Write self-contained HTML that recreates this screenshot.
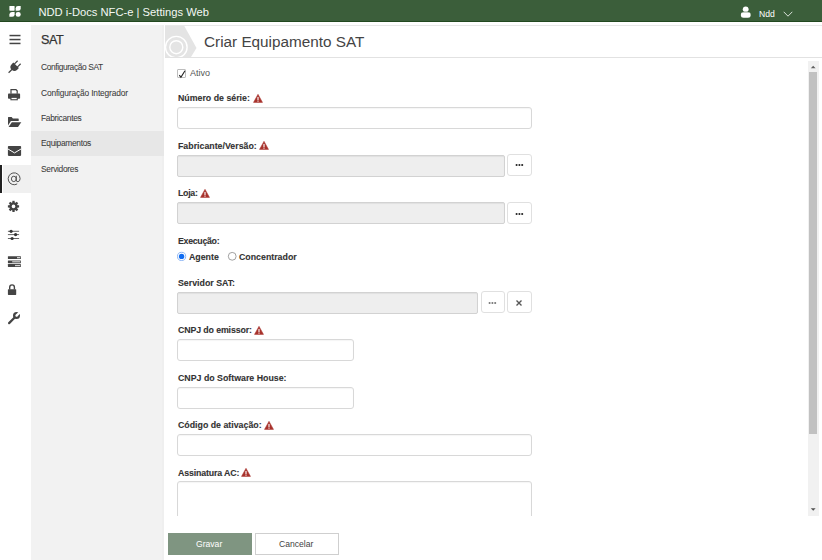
<!DOCTYPE html>
<html><head><meta charset="utf-8">
<style>
*{box-sizing:border-box;margin:0;padding:0}
html,body{width:822px;height:560px;overflow:hidden;background:#fff;font-family:"Liberation Sans",sans-serif;color:#333}
.a{position:absolute}
.t{position:absolute;white-space:nowrap;line-height:1}
#hdr{left:0;top:0;width:822px;height:22px;background:#3b5e3a;border-bottom:1px solid #22481f}
#sub{left:31px;top:25px;width:133px;height:535px;background:#f2f2f2}
.m{font-size:8.4px;color:#3a3a3a;left:41px;letter-spacing:-0.3px;-webkit-text-stroke:0.05px #3a3a3a}
.lbl{font-size:8.8px;font-weight:bold;color:#333;left:178px;-webkit-text-stroke:0.1px #333}
.inp{position:absolute;left:177px;height:22px;border:1px solid #d8d8d8;border-radius:3px;background:#fff;box-shadow:inset 0 1px 1px rgba(0,0,0,.04)}
.dis{background:#eeeeee;border-color:#d2d2d2;border-radius:2px;box-shadow:inset 0 1px 1px rgba(0,0,0,.06)}
.btn{position:absolute;width:25px;height:22px;border:1px solid #e0e0e0;border-radius:3px;background:#fff}
.warn{position:absolute}
</style></head><body>
<div id="hdr" class="a">
  <svg class="a" style="left:9px;top:5px" width="13" height="13" viewBox="9 5 13 13"><rect x="9.4" y="5.9" width="5.2" height="4.8" rx="0.6" fill="#fff"/><path d="M15.7 8.2 Q15.7 5.9 18 5.9 H20.7 V8.5 Q20.7 10.7 18.4 10.7 H15.7 Z" fill="#fff"/><path d="M9.4 14.5 Q9.4 12 11.8 12 H14.6 V14.4 Q14.6 16.7 12.3 16.7 H9.4 Z" fill="#fff"/><rect x="15.7" y="12" width="5" height="4.7" rx="2.3" fill="#fff"/></svg>
  <div class="t" id="htitle" style="left:38.4px;top:6.7px;font-size:11.2px;color:#f4f8f4">NDD i-Docs NFC-e | Settings Web</div>
  <svg class="a" style="left:738px;top:4px" width="16" height="16" viewBox="738 4 16 16"><circle cx="745.7" cy="9.3" r="2.9" fill="#fff"/><path d="M740.9 15.3 V14.6 Q740.9 12 743.5 12 H748 Q750.6 12 750.6 14.6 V15.3 Q750.6 17.8 748 17.8 H743.5 Q740.9 17.8 740.9 15.3 Z" fill="#fff"/><path d="M742 12 H749.5" stroke="#3b5e3a" stroke-width="0.6"/></svg>
  <div class="t" id="ndd" style="left:759px;top:9.5px;font-size:8.6px;color:#fff">Ndd</div>
  <svg class="a" style="left:783px;top:10.5px" width="10" height="7" viewBox="0 0 10 7"><path d="M0.7 0.8 L5 5.2 L9.3 0.8" stroke="#d8e0d8" stroke-width="1" fill="none"/></svg>
</div>

<!-- left rail -->
<div class="a" style="left:0;top:165px;width:2px;height:28px;background:#222"></div>
<div class="a" style="left:3px;top:165px;width:28px;height:28px;background:#f0f0f0"></div>
<svg class="a" style="left:0;top:26px" width="31" height="310" viewBox="0 26 31 310">
  <g fill="#444">
    <rect x="9.5" y="34.8" width="11" height="1.5"/>
    <rect x="9.5" y="38.8" width="11" height="1.5"/>
    <rect x="9.5" y="42.7" width="11" height="1.5"/>
    <!-- plug -->
    <g transform="translate(14.2 67.2) rotate(45) scale(0.85)">
      <rect x="-3.2" y="-8.2" width="1.4" height="5.5"/>
      <rect x="1.8" y="-8.2" width="1.4" height="5.5"/>
      <path d="M-4.6 -3.2 H4.6 V-0.4 A4.6 4.6 0 0 1 -4.6 -0.4 Z"/>
      <rect x="-0.7" y="3" width="1.4" height="6.3"/>
    </g>
    <!-- printer -->
    <path d="M10.4 89 H16.2 L17.8 90.6 V93.8 H16.6 V91.2 L15.8 90.2 H11.6 V93.8 H10.4 Z"/>
    <rect x="8" y="93.6" width="12.1" height="5.1" rx="0.8"/>
    <path d="M10.4 97.5 H17.8 V100.3 H10.4 Z"/>
    <rect x="11.5" y="97.9" width="5.2" height="1.3" fill="#fff"/>
    <!-- folder open -->
    <path d="M8 117.6 Q8 117.1 8.5 117.1 H11.6 L12.9 118.5 H18.2 Q18.7 118.5 18.7 119 V120.9 H10.9 L8 125.4 Z"/>
    <path d="M11.8 122.2 H21.3 L18 127.1 H8.6 Z"/>
    <!-- envelope -->
    <rect x="7.9" y="145.9" width="13.2" height="10" rx="0.8"/>
    <!-- gear -->
    <g transform="translate(13.5 206.4)">
      <circle r="4.2"/>
      <g id="tooth"><rect x="-1.15" y="-5.6" width="2.3" height="2.5"/></g>
      <use href="#tooth" transform="rotate(45)"/><use href="#tooth" transform="rotate(90)"/><use href="#tooth" transform="rotate(135)"/>
      <use href="#tooth" transform="rotate(180)"/><use href="#tooth" transform="rotate(225)"/><use href="#tooth" transform="rotate(270)"/><use href="#tooth" transform="rotate(315)"/>
      <circle r="1.8" fill="#fff"/>
    </g>
    <!-- sliders -->
    <rect x="7.9" y="230.8" width="11.2" height="1" fill="#666"/>
    <rect x="7.9" y="234.1" width="11.2" height="1" fill="#666"/>
    <rect x="7.9" y="238" width="11.2" height="1" fill="#666"/>
    <circle cx="11.1" cy="231.3" r="1.6" fill="#333"/>
    <circle cx="15.6" cy="234.6" r="1.6" fill="#333"/>
    <circle cx="12.1" cy="238.5" r="1.6" fill="#333"/>
    <!-- tasks -->
    <rect x="7.9" y="256.2" width="13" height="2.9" rx="0.4"/>
    <rect x="7.9" y="260.4" width="13" height="2.8" rx="0.4"/>
    <rect x="7.9" y="264.1" width="13" height="2.9" rx="0.4"/>
    <!-- lock -->
    <rect x="7.9" y="289.2" width="8.3" height="5.7" rx="0.6"/>
    <path d="M9.7 289.5 V287.2 A2.35 2.35 0 0 1 14.4 287.2 V289.5" fill="none" stroke="#444" stroke-width="1.4"/>
    <!-- wrench -->
    <line x1="15.2" y1="317" x2="9.1" y2="323.1" stroke="#444" stroke-width="2.2" stroke-linecap="round"/>
    <circle cx="16.5" cy="315.6" r="3.5"/>
    <g transform="translate(16.5 315.6) rotate(45)"><rect x="-1.15" y="-5" width="2.3" height="5" fill="#fff"/><circle cx="0" cy="0" r="1.15" fill="#fff"/></g>
  </g>
  <path d="M8 149 L14.5 152.9 L21 149" stroke="#fff" stroke-width="1" fill="none"/>
  <g fill="#d0d0d0">
    <rect x="17" y="257" width="3.2" height="1.3"/>
    <rect x="12.2" y="261.2" width="8" height="1.2"/>
    <rect x="15" y="264.9" width="5.2" height="1.3"/>
  </g>
</svg>
<svg class="a" style="left:6px;top:170px" width="18" height="18" viewBox="6 170 18 18"><g fill="none" stroke="#4a4a4a" stroke-width="0.95" transform="translate(0 0.4)"><ellipse cx="13.8" cy="178.5" rx="2.4" ry="2.7"/><path d="M16.3 175.4 V179.6 Q16.3 181.5 18 181.3 Q20.1 180.9 20.1 178.2 A5.95 5.95 0 1 0 17.2 183.5"/></g></svg>

<div id="sub" class="a">
  <div class="t" id="sat" style="left:10px;top:8.6px;font-size:12.6px;letter-spacing:-0.4px;color:#333;-webkit-text-stroke:0.25px #333">SAT</div>
</div>
<div class="a" style="left:162px;top:25px;width:2px;height:535px;background:#efefef"></div>
<div class="a" style="left:31px;top:131px;width:133px;height:25px;background:#e7e7e7"></div>
<div class="t m" style="top:63.3px;letter-spacing:-0.38px">Configuração SAT</div>
<div class="t m" style="top:89.3px;letter-spacing:-0.15px">Configuração Integrador</div>
<div class="t m" style="top:114.3px">Fabricantes</div>
<div class="t m" style="top:139px">Equipamentos</div>
<div class="t m" style="top:165.3px">Servidores</div>

<!-- page header -->
<svg class="a" style="left:165px;top:26px" width="35" height="32" viewBox="165 26 35 32">
  <polygon points="165,26 184.3,26 196.5,48 191,57 165,57" fill="#e4e4e4"/>
  <circle cx="176.3" cy="47.2" r="10.8" fill="none" stroke="#fff" stroke-width="1.4"/>
  <circle cx="176.3" cy="47.2" r="6.5" fill="none" stroke="#fff" stroke-width="1.4"/>
</svg>
<div class="t" id="title" style="left:204px;top:34px;font-size:15.3px;color:#444">Criar Equipamento SAT</div>
<div class="a" style="left:165px;top:57px;width:657px;height:1px;background:#e2e2e2"></div>
<div class="a" style="left:165px;top:25px;width:657px;height:1px;background:#e8e8e8"></div>

<!-- form -->
<div class="a" style="left:165px;top:58px;width:643px;height:458px;overflow:hidden">
 <div class="a" style="left:-165px;top:-58px;width:822px;height:600px">
  <div class="a" style="left:177px;top:69px;width:9px;height:9px;border:1px solid #bdbdbd;border-radius:1px;background:#fff"></div>
  <svg class="a" style="left:177px;top:69px" width="10" height="10" viewBox="0 0 10 10"><path d="M2.3 6.2 L3.9 8.2 L8 1.8" stroke="#222" stroke-width="1.1" fill="none"/></svg>
  <div class="t" id="ativo" style="left:190px;top:69px;font-size:9px;color:#555">Ativo</div>

  <div class="t lbl" style="top:94px">Número de série:</div><svg class="a" style="left:252.5px;top:93.5px" width="10" height="9" viewBox="0 0 10 9"><path d="M5 0.3 L9.5 8.4 H0.5 Z" fill="#a8322c" stroke="#a8322c" stroke-width="0.5" stroke-linejoin="round"/><rect x="4.45" y="2.9" width="1.1" height="3.2" fill="#fff"/><rect x="4.45" y="6.6" width="1.1" height="1.1" fill="#fff"/></svg>
  <div class="inp" style="top:107px;width:355px"></div>

  <div class="t lbl" style="top:142px">Fabricante/Versão:</div><svg class="a" style="left:259px;top:141px" width="10" height="9" viewBox="0 0 10 9"><path d="M5 0.3 L9.5 8.4 H0.5 Z" fill="#a8322c" stroke="#a8322c" stroke-width="0.5" stroke-linejoin="round"/><rect x="4.45" y="2.9" width="1.1" height="3.2" fill="#fff"/><rect x="4.45" y="6.6" width="1.1" height="1.1" fill="#fff"/></svg>
  <div class="inp dis" style="top:155px;width:328px"></div>
  <div class="btn" style="left:507px;top:154px"></div><svg class="a" style="left:515px;top:163.3px" width="10" height="4" viewBox="0 0 10 4"><circle cx="1.6" cy="2" r="1.05" fill="#222"/><circle cx="4.4" cy="2" r="1.05" fill="#222"/><circle cx="7.2" cy="2" r="1.05" fill="#222"/></svg>

  <div class="t lbl" style="top:189px;letter-spacing:-0.3px">Loja:</div><svg class="a" style="left:200px;top:188.5px" width="10" height="9" viewBox="0 0 10 9"><path d="M5 0.3 L9.5 8.4 H0.5 Z" fill="#a8322c" stroke="#a8322c" stroke-width="0.5" stroke-linejoin="round"/><rect x="4.45" y="2.9" width="1.1" height="3.2" fill="#fff"/><rect x="4.45" y="6.6" width="1.1" height="1.1" fill="#fff"/></svg>
  <div class="inp dis" style="top:202px;width:328px"></div>
  <div class="btn" style="left:507px;top:202px"></div><svg class="a" style="left:515px;top:211.5px" width="10" height="4" viewBox="0 0 10 4"><circle cx="1.6" cy="2" r="1.05" fill="#222"/><circle cx="4.4" cy="2" r="1.05" fill="#222"/><circle cx="7.2" cy="2" r="1.05" fill="#222"/></svg>

  <div class="t lbl" style="top:237px;letter-spacing:-0.3px">Execução:</div>
  <svg class="a" style="left:176px;top:251px" width="12" height="12" viewBox="176 251 12 12"><circle cx="181.6" cy="256.4" r="4.1" fill="#fff" stroke="#8db6f5" stroke-width="1"/><circle cx="181.6" cy="256.4" r="2.7" fill="#0f6cf2"/></svg>
  <svg class="a" style="left:226px;top:251px" width="12" height="12" viewBox="226 251 12 12"><circle cx="232.2" cy="256.3" r="3.9" fill="#fff" stroke="#8a8a8a" stroke-width="0.8"/></svg>
  <div class="t lbl" style="left:189px;top:253px">Agente</div>
  <div class="t lbl" style="left:239px;top:253px">Concentrador</div>

  <div class="t lbl" style="top:279px">Servidor SAT:</div>
  <div class="inp dis" style="top:292px;width:301px"></div>
  <div class="btn" style="left:481px;top:291px;width:24px"></div><svg class="a" style="left:488.4px;top:300.5px" width="10" height="4" viewBox="0 0 10 4"><circle cx="1.6" cy="2" r="1.05" fill="#777"/><circle cx="4.4" cy="2" r="1.05" fill="#777"/><circle cx="7.2" cy="2" r="1.05" fill="#777"/></svg>
  <div class="btn" style="left:507px;top:291px"></div><svg class="a" style="left:515px;top:299px" width="8" height="8" viewBox="0 0 8 8"><path d="M1.5 1.5 L6.5 6.5 M6.5 1.5 L1.5 6.5" stroke="#555" stroke-width="1.35"/></svg>

  <div class="t lbl" style="top:326px;letter-spacing:-0.12px">CNPJ do emissor:</div><svg class="a" style="left:253.5px;top:325.5px" width="10" height="9" viewBox="0 0 10 9"><path d="M5 0.3 L9.5 8.4 H0.5 Z" fill="#a8322c" stroke="#a8322c" stroke-width="0.5" stroke-linejoin="round"/><rect x="4.45" y="2.9" width="1.1" height="3.2" fill="#fff"/><rect x="4.45" y="6.6" width="1.1" height="1.1" fill="#fff"/></svg>
  <div class="inp" style="top:339px;width:177px"></div>

  <div class="t lbl" style="top:374px">CNPJ do Software House:</div>
  <div class="inp" style="top:387px;width:177px"></div>

  <div class="t lbl" style="top:421px">Código de ativação:</div><svg class="a" style="left:264px;top:420.5px" width="10" height="9" viewBox="0 0 10 9"><path d="M5 0.3 L9.5 8.4 H0.5 Z" fill="#a8322c" stroke="#a8322c" stroke-width="0.5" stroke-linejoin="round"/><rect x="4.45" y="2.9" width="1.1" height="3.2" fill="#fff"/><rect x="4.45" y="6.6" width="1.1" height="1.1" fill="#fff"/></svg>
  <div class="inp" style="top:434px;width:355px"></div>

  <div class="t lbl" style="top:469px;letter-spacing:-0.14px">Assinatura AC:</div><svg class="a" style="left:241.2px;top:468px" width="10" height="9" viewBox="0 0 10 9"><path d="M5 0.3 L9.5 8.4 H0.5 Z" fill="#a8322c" stroke="#a8322c" stroke-width="0.5" stroke-linejoin="round"/><rect x="4.45" y="2.9" width="1.1" height="3.2" fill="#fff"/><rect x="4.45" y="6.6" width="1.1" height="1.1" fill="#fff"/></svg>
  <div class="inp" style="top:481px;width:355px;height:60px"></div>
 </div>
</div>

<!-- scrollbar -->
<div class="a" style="left:808px;top:61px;width:11px;height:455px;background:#f1f1f1"></div>
<div class="a" style="left:809px;top:72px;width:8px;height:362px;background:#c1c1c1"></div>
<svg class="a" style="left:808px;top:61px" width="11" height="455" viewBox="808 61 11 455"><path d="M810.8 68.2 L813.2 65.8 L815.6 68.2 Z" fill="#606060"/><path d="M810.8 508.3 L813.2 510.7 L815.6 508.3 Z" fill="#505050"/></svg>

<!-- footer -->
<div class="a" style="left:168px;top:533px;width:84px;height:22px;background:#7f9581"></div>
<div class="t" style="left:196px;top:540px;font-size:8.6px;color:#fff">Gravar</div>
<div class="a" style="left:255px;top:533px;width:84px;height:22px;background:#fff;border:1px solid #cfcfcf"></div>
<div class="t" style="left:279px;top:540px;font-size:8.6px;color:#444">Cancelar</div>
</body></html>
